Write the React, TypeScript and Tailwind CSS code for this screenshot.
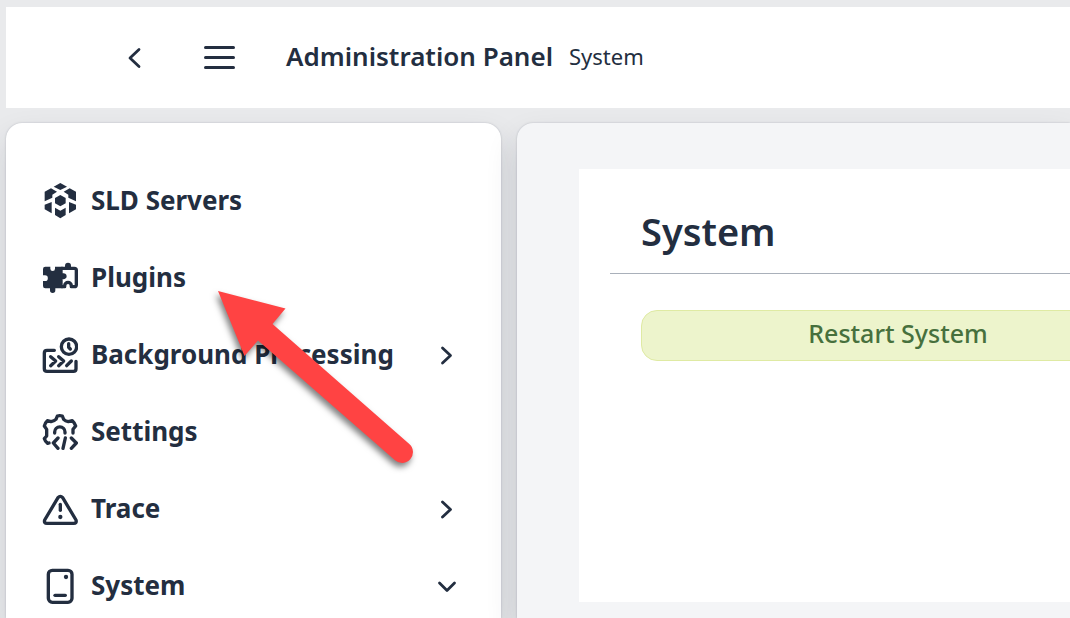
import type { ReactNode } from "react";

function Glyph({ children }: { children: ReactNode }) {
  return (
    <svg
      viewBox="0 0 108 108"
      className="size-9 shrink-0"
      fill="none"
      stroke="currentColor"
      strokeWidth="10"
      strokeLinecap="round"
      strokeLinejoin="round"
      aria-hidden="true"
    >
      {children}
    </svg>
  );
}

const ServersIcon = () => (
  <Glyph>
    <g fill="currentColor" stroke="none">
      <path d="M55 0 75 11 55 21 35 11Z" />
      <path d="M27 16 45 26 31 35V44L8 55V26Z" />
      <path d="M83 16 65 26 79 35V44L102 55V26Z" />
      <path d="M55 36 71 45V61L55 70 39 61V45Z" />
      <path d="M8 65 29 57V91L8 79Z" />
      <path d="M102 65 81 57V91L102 79Z" />
      <path d="M39 74 55 83 71 74V96L55 106 39 96Z" />
    </g>
  </Glyph>
);

const PluginsIcon = () => (
  <Glyph>
    <path
      fill="currentColor"
      stroke="none"
      d="M10 20H25V26a7 7 0 0 0 14 0V20H62V40a9 9 0 1 1 0 17V85H40V91a8 8 0 0 1-16 0V85H10Q3 85 3 78V63H9a8 8 0 0 0 0-17H3V27Q3 20 10 20Z"
    />
    <path d="M58 25H97Q103 25 103 31V74Q103 80 97 80H88V77a10 10 0 0 0-20 0V80H58" strokeLinecap="butt" />
    <path fill="currentColor" stroke="none" d="M69 22V17a9 9 0 0 1 18 0V22Z" />
  </Glyph>
);

const ProcessingIcon = () => (
  <Glyph>
    <path d="M37 40H15Q7 40 7 48V95Q7 103 15 103H94Q102 103 102 95V73" />
    <path d="M26 59 41 72 26 86M50 59 65 72 50 86M88 72 74 86" />
    <circle cx="81" cy="29" r="23" />
    <path d="M80 20V31L85 36" />
  </Glyph>
);

const SettingsIcon = () => (
  <Glyph>
    <path d="M21 87 17 88Q9 82 7 74L14 66V46L7 36Q9 26 16 20L27 23Q38 21 42 16L46 6Q53 4 61 6L65 16Q70 21 79 23L91 20Q98 26 101 36L93 46V57" />
    <path d="M38 57V54a15 15 0 0 1 31 0V57" />
    <path d="M48 72 34 87 48 103M70 72 63 103M88 72 103 87 88 103" />
  </Glyph>
);

const TraceIcon = () => (
  <Glyph>
    <path d="M48 20Q55 12 62 20L102 87Q105 97 95 97H15Q5 97 8 87Z" />
    <path d="M55 40V58" />
    <circle cx="55" cy="78" r="6.500" fill="currentColor" stroke="none" />
  </Glyph>
);

const SystemIcon = () => (
  <Glyph>
    <rect x="19" y="7" width="71" height="96" rx="12" />
    <circle cx="72" cy="27" r="6.500" fill="currentColor" stroke="none" />
    <path d="M39 82H70" />
  </Glyph>
);

function Chevron({ d }: { d: string }) {
  return (
    <svg
      viewBox="0 0 24 24"
      className="size-6 shrink-0"
      fill="none"
      stroke="currentColor"
      strokeWidth="2.8"
      strokeLinecap="round"
      strokeLinejoin="round"
      aria-hidden="true"
    >
      <path d={d} />
    </svg>
  );
}

const LEFT = "M17 4.500 8 13 17 21.500";
const RIGHT = "M7.500 5 15.500 12.500 7.500 20";
const DOWN = "M4.500 9 12 16.500 19.500 9";

const items = [
  { label: "SLD Servers", icon: <ServersIcon /> },
  { label: "Plugins", icon: <PluginsIcon /> },
  { label: "Background Processing", icon: <ProcessingIcon />, chevron: RIGHT },
  { label: "Settings", icon: <SettingsIcon /> },
  { label: "Trace", icon: <TraceIcon />, chevron: RIGHT },
  { label: "System", icon: <SystemIcon />, chevron: DOWN },
];

export default function App() {
  return (
    <div className="relative flex h-screen flex-col gap-[15px] overflow-hidden bg-[#e9eaec] pt-[7px] pl-1.5 font-['Noto_Sans',sans-serif] text-[#232e40]">
      <header className="flex h-[101px] shrink-0 items-center bg-white pb-0.5 pl-[116px]">
        <button type="button" aria-label="Back" className="mr-[53px]">
          <Chevron d={LEFT} />
        </button>
        <button type="button" aria-label="Menu" className="mr-[47px]">
          <svg viewBox="0 0 40 30" className="h-[30px] w-10" stroke="currentColor" strokeWidth="3" strokeLinecap="round" aria-hidden="true">
            <path d="M6.500 5.500H34.500M6.500 15.500H34.500M6.500 25.500H34.500" />
          </svg>
        </button>
        <h1 className="pb-0.5 text-[26px] leading-9 font-semibold whitespace-nowrap">Administration Panel</h1>
        <span className="ml-4 pb-0.5 text-[22px] leading-9">System</span>
      </header>

      <div className="flex min-h-0 flex-1 gap-4">
        <aside className="w-[495px] shrink-0 rounded-t-2xl bg-white pt-10 shadow-[0_0_2px_rgba(34,44,62,0.25),0_16px_32px_rgba(34,44,62,0.14)]">
          <nav aria-label="Administration">
            <ul className="flex flex-col gap-px">
              {items.map((item) => (
                <li key={item.label}>
                  <a href="#" className="flex h-[76px] items-center pr-[42px] pl-9">
                    {item.icon}
                    <span className="ml-[13px] flex-1 pb-0.5 text-[26px] leading-9 font-bold whitespace-nowrap">
                      {item.label}
                    </span>
                    {item.chevron && <Chevron d={item.chevron} />}
                  </a>
                </li>
              ))}
            </ul>
          </nav>
        </aside>

        <main className="min-w-0 flex-1 overflow-hidden rounded-tl-2xl bg-[#f4f5f7] pt-[46px] pl-[62px] shadow-[0_0_2px_rgba(34,44,62,0.25),0_16px_32px_rgba(34,44,62,0.14)]">
          <section className="min-h-[433px] bg-white pl-[31px]">
            <h2 className="border-b border-[#a9b0ba] pt-9 pb-4 pl-[31px] text-[38px] leading-[52px] font-semibold">
              System
            </h2>
            <div className="flex overflow-hidden pt-9 pl-[31px]">
              <button
                type="button"
                className="h-[51px] w-[514px] shrink-0 rounded-2xl border border-[#dfeaa3] bg-[#edf4cc] pb-1.5 text-[25px] leading-9 font-medium text-[#47703d]"
              >
                Restart System
              </button>
            </div>
          </section>
        </main>
      </div>

      <svg
        viewBox="0 0 210 190"
        className="pointer-events-none absolute top-[285px] left-[210px] h-[190px] w-[210px] drop-shadow-[-2px_4px_3px_rgba(0,0,0,0.5)]"
        aria-hidden="true"
      >
        <path
          fill="#ff4343"
          d="M8 6 75.500 23.500 62.500 39 199.300 159A10.800 10.800 0 0 1 185 175.200L48 55.500 34.500 71Z"
        />
      </svg>
    </div>
  );
}
